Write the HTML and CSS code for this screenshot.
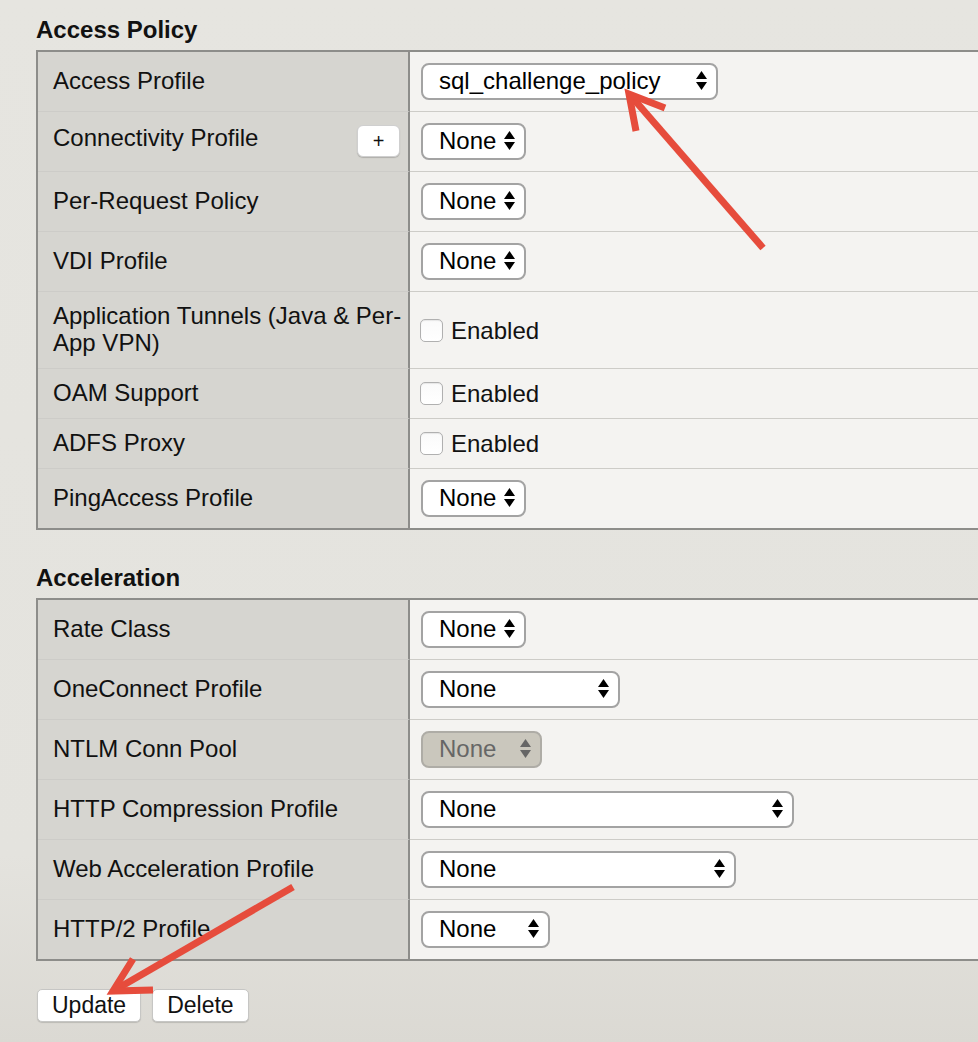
FILE: index.html
```html
<!DOCTYPE html>
<html lang="en">
<head>
<meta charset="utf-8">
<title>Access Policy</title>
<link rel="stylesheet" href="styles.css">
</head>
<body>
<div class="page">
  <h2 class="section-title">Access Policy</h2>
  <table class="props">
    <tr>
      <th>Access Profile</th>
      <td><span class="sel w-sql"><span class="sel-val">sql_challenge_policy</span><svg class="sel-arr" viewBox="0 0 11 19"><path d="M0 8L5.5 0L11 8Z"/><path d="M0 11L11 11L5.5 19Z"/></svg></span></td>
    </tr>
    <tr>
      <th><div class="lbl-btn"><span>Connectivity Profile</span><button class="plus">+</button></div></th>
      <td><span class="sel w-none"><span class="sel-val">None</span><svg class="sel-arr" viewBox="0 0 11 19"><path d="M0 8L5.5 0L11 8Z"/><path d="M0 11L11 11L5.5 19Z"/></svg></span></td>
    </tr>
    <tr>
      <th>Per-Request Policy</th>
      <td><span class="sel w-none"><span class="sel-val">None</span><svg class="sel-arr" viewBox="0 0 11 19"><path d="M0 8L5.5 0L11 8Z"/><path d="M0 11L11 11L5.5 19Z"/></svg></span></td>
    </tr>
    <tr>
      <th>VDI Profile</th>
      <td><span class="sel w-none"><span class="sel-val">None</span><svg class="sel-arr" viewBox="0 0 11 19"><path d="M0 8L5.5 0L11 8Z"/><path d="M0 11L11 11L5.5 19Z"/></svg></span></td>
    </tr>
    <tr>
      <th>Application Tunnels (Java &amp; Per-App VPN)</th>
      <td><label class="chk"><span class="box"></span>Enabled</label></td>
    </tr>
    <tr>
      <th>OAM Support</th>
      <td><label class="chk"><span class="box"></span>Enabled</label></td>
    </tr>
    <tr>
      <th>ADFS Proxy</th>
      <td><label class="chk"><span class="box"></span>Enabled</label></td>
    </tr>
    <tr>
      <th>PingAccess Profile</th>
      <td><span class="sel w-none"><span class="sel-val">None</span><svg class="sel-arr" viewBox="0 0 11 19"><path d="M0 8L5.5 0L11 8Z"/><path d="M0 11L11 11L5.5 19Z"/></svg></span></td>
    </tr>
  </table>

  <h2 class="section-title second">Acceleration</h2>
  <table class="props">
    <tr>
      <th>Rate Class</th>
      <td><span class="sel w-none"><span class="sel-val">None</span><svg class="sel-arr" viewBox="0 0 11 19"><path d="M0 8L5.5 0L11 8Z"/><path d="M0 11L11 11L5.5 19Z"/></svg></span></td>
    </tr>
    <tr>
      <th>OneConnect Profile</th>
      <td><span class="sel w-oneconnect"><span class="sel-val">None</span><svg class="sel-arr" viewBox="0 0 11 19"><path d="M0 8L5.5 0L11 8Z"/><path d="M0 11L11 11L5.5 19Z"/></svg></span></td>
    </tr>
    <tr>
      <th>NTLM Conn Pool</th>
      <td><span class="sel w-ntlm disabled"><span class="sel-val">None</span><svg class="sel-arr" viewBox="0 0 11 19"><path d="M0 8L5.5 0L11 8Z"/><path d="M0 11L11 11L5.5 19Z"/></svg></span></td>
    </tr>
    <tr>
      <th>HTTP Compression Profile</th>
      <td><span class="sel w-http"><span class="sel-val">None</span><svg class="sel-arr" viewBox="0 0 11 19"><path d="M0 8L5.5 0L11 8Z"/><path d="M0 11L11 11L5.5 19Z"/></svg></span></td>
    </tr>
    <tr>
      <th>Web Acceleration Profile</th>
      <td><span class="sel w-web"><span class="sel-val">None</span><svg class="sel-arr" viewBox="0 0 11 19"><path d="M0 8L5.5 0L11 8Z"/><path d="M0 11L11 11L5.5 19Z"/></svg></span></td>
    </tr>
    <tr>
      <th>HTTP/2 Profile</th>
      <td><span class="sel w-h2"><span class="sel-val">None</span><svg class="sel-arr" viewBox="0 0 11 19"><path d="M0 8L5.5 0L11 8Z"/><path d="M0 11L11 11L5.5 19Z"/></svg></span></td>
    </tr>
  </table>

  <div class="actions">
    <button class="btn">Update</button>
    <button class="btn">Delete</button>
  </div>
</div>

<svg class="annot" width="978" height="1042" viewBox="0 0 978 1042">
  <g fill="none" stroke="#e64c3c" stroke-width="7" stroke-linecap="butt" stroke-linejoin="miter">
    <line x1="763" y1="248" x2="631" y2="96"/>
    <polyline points="665,108 629,94 636,131"/>
    <line x1="293" y1="887" x2="115" y2="990"/>
    <polyline points="133,959 113,991 153,990"/>
  </g>
</svg>
</body>
</html>
```

FILE: styles.css
```css
html {
  overflow: hidden;
}

body {
  margin: 0;
  min-height: 1042px;
  font-family: "Liberation Sans", Arial, sans-serif;
  font-size: 24px;
  line-height: 27px;
  color: #111;
  background: linear-gradient(180deg, #e6e5e0 0%, #e4e3de 82%, #dbd9d3 100%);
}

.page {
  padding: 16px 0 0 36px;
}

.section-title {
  margin: 0 0 6px;
  font-size: 24px;
  line-height: 28px;
  font-weight: bold;
  color: #111;
}

.section-title.second {
  margin-top: 34px;
}

.props {
  width: 960px;
  border-collapse: separate;
  border-spacing: 0;
  border-top: 2px solid #8d8d8a;
  border-left: 2px solid #8d8d8a;
  border-bottom: 2px solid #8d8d8a;
}

.props th,
.props td {
  vertical-align: middle;
  border-bottom: 1px solid #cdccc8;
}

.props tr:last-child th,
.props tr:last-child td {
  border-bottom: none;
}

.props th {
  width: 355px;
  padding: 10px 0 12px 15px;
  text-align: left;
  font-weight: normal;
  background: #d6d5d0;
  border-right: 2px solid #8d8d8a;
  color: #111;
}

.props td {
  padding: 11px 0 11px 11px;
  background: #f4f3f1;
}

.lbl-btn {
  display: flex;
  align-items: flex-start;
  justify-content: space-between;
  padding-right: 8px;
}

.plus {
  width: 43px;
  height: 32px;
  margin-top: 1px;
  padding: 0;
  border: 1px solid #cfcfcf;
  border-radius: 6px;
  background: #fff;
  box-shadow: 0 1px 1px rgba(0, 0, 0, 0.18);
  font-family: "Liberation Sans", Arial, sans-serif;
  font-size: 20px;
  line-height: 30px;
  color: #111;
}

.sel {
  display: inline-flex;
  align-items: center;
  justify-content: space-between;
  box-sizing: border-box;
  height: 37px;
  padding: 0 9px 2px 16px;
  border: 2px solid #a3a3a3;
  border-radius: 8px;
  background: #fff;
  color: #000;
  vertical-align: middle;
}

.sel-val {
  white-space: nowrap;
}

.sel-arr {
  width: 11px;
  height: 19px;
  flex: none;
  fill: #000;
}

.sel.disabled {
  background: #cac7bd;
  border-color: #aeaca6;
  color: #666;
}

.sel.disabled .sel-arr {
  fill: #666;
}

.w-sql { width: 297px; }
.w-none { width: 105px; }
.w-ntlm { width: 121px; }
.w-oneconnect { width: 199px; }
.w-http { width: 373px; }
.w-web { width: 315px; }
.w-h2 { width: 129px; }

.chk {
  display: flex;
  align-items: center;
  color: #111;
}

.box {
  box-sizing: border-box;
  width: 23px;
  height: 23px;
  margin-left: -1px;
  margin-right: 8px;
  border: 1px solid #b0b0b0;
  border-radius: 5px;
  background: linear-gradient(180deg, #fafafa, #fff);
  box-shadow: inset 0 1px 1px rgba(0, 0, 0, 0.08);
}

.actions {
  display: flex;
  gap: 11px;
  margin-top: 28px;
  padding-left: 1px;
}

.btn {
  height: 33px;
  padding: 0 14px;
  border: 1px solid #c6c6c4;
  border-radius: 5px;
  background: #fff;
  box-shadow: 0 1px 1px rgba(0, 0, 0, 0.15);
  font-family: "Liberation Sans", Arial, sans-serif;
  font-size: 23px;
  line-height: 31px;
  color: #111;
}

.annot {
  position: absolute;
  top: 0;
  left: 0;
  pointer-events: none;
}
```
